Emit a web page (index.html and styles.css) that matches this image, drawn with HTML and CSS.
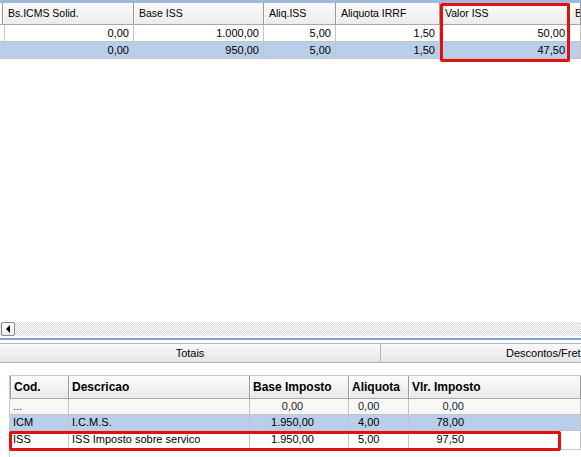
FILE: index.html
```html
<!DOCTYPE html>
<html>
<head>
<meta charset="utf-8">
<link rel="stylesheet" href="styles.css">
</head>
<body>
<div class="app">
  <div class="topgrid">
    <div class="trow thead">
      <div class="c"></div>
      <div class="c">Bs.ICMS Solid.</div>
      <div class="c">Base ISS</div>
      <div class="c">Aliq.ISS</div>
      <div class="c">Aliquota IRRF</div>
      <div class="c">Valor ISS</div>
      <div class="c">B</div>
    </div>
    <div class="trow tbody">
      <div class="c"></div>
      <div class="c">0,00</div>
      <div class="c">1.000,00</div>
      <div class="c">5,00</div>
      <div class="c">1,50</div>
      <div class="c">50,00</div>
      <div class="c"></div>
    </div>
    <div class="trow tbody sel">
      <div class="c"></div>
      <div class="c">0,00</div>
      <div class="c">950,00</div>
      <div class="c">5,00</div>
      <div class="c">1,50</div>
      <div class="c">47,50</div>
      <div class="c"></div>
    </div>
    <div class="redbox top-red"></div>
  </div>
  <div class="spacer"></div>
  <div class="hscroll">
    <div class="arrowbtn"><span class="tri"></span></div>
  </div>
  <div class="blueline"></div>
  <div class="tabbar">
    <div class="tab tab1">Totais</div>
    <div class="tab tab2">Descontos/Fret</div>
  </div>
  <div class="panel">
    <div class="brow bhead">
      <div class="c">Cod.</div>
      <div class="c">Descricao</div>
      <div class="c">Base Imposto</div>
      <div class="c">Aliquota</div>
      <div class="c">Vlr. Imposto</div>
    </div>
    <div class="brow bbody first">
      <div class="c">...</div>
      <div class="c"></div>
      <div class="c base">0,00</div>
      <div class="c aliq">0,00</div>
      <div class="c vlr">0,00</div>
    </div>
    <div class="brow bbody sel">
      <div class="c">ICM</div>
      <div class="c">I.C.M.S.</div>
      <div class="c base">1.950,00</div>
      <div class="c aliq">4,00</div>
      <div class="c vlr">78,00</div>
    </div>
    <div class="brow bbody last">
      <div class="c">ISS</div>
      <div class="c">ISS Imposto sobre servico</div>
      <div class="c base">1.950,00</div>
      <div class="c aliq">5,00</div>
      <div class="c vlr">97,50</div>
    </div>
    <div class="redbox bottom-red"></div>
  </div>
</div>
</body>
</html>
```

FILE: styles.css
```css
* { box-sizing: border-box; }
html, body { margin: 0; padding: 0; background: #fff; }
body {
  font-family: "Liberation Sans", Arial, sans-serif;
  font-size: 11px;
  color: #000;
  width: 581px;
  height: 457px;
  overflow: hidden;
}
.app {
  display: flex;
  flex-direction: column;
  height: 457px;
}
.topgrid {
  position: relative;
  border-top: 3px solid #9db9dc;
}
.trow {
  display: grid;
  grid-template-columns: 3px 131px 130px 72px 104px 130px 11px;
}
.thead { height: 22px; }
.thead .c {
  font-size: 10.5px;
  background: linear-gradient(#fbfbfb, #ececec);
  border-right: 1px solid #9a9a9a;
  border-bottom: 1px solid #a8a8a8;
  box-shadow: inset 1px 0 0 #ffffff;
  padding-left: 5px;
  line-height: 21px;
  white-space: nowrap;
  overflow: hidden;
}
.thead .c:first-child { padding: 0; }
.tbody { height: 17px; }
.tbody .c {
  border-right: 1px solid #c4c4c4;
  border-bottom: 1px solid #c4c4c4;
  text-align: right;
  padding-right: 4px;
  line-height: 16px;
  white-space: nowrap;
  overflow: hidden;
}
.sel .c { background: #b9cfe9; }
.redbox {
  position: absolute;
  border: 3px solid #e01010;
  border-radius: 2px;
  pointer-events: none;
}
.top-red {
  left: 440px;
  top: 0;
  width: 130px;
  height: 59px;
}
.spacer { height: 263px; }
.hscroll {
  height: 14px;
  background: repeating-conic-gradient(#dadada 0 25%, #ffffff 0 50%) 0 0 / 2px 2px;
  padding-left: 1px;
}
.arrowbtn {
  width: 14px;
  height: 14px;
  border: 1px solid #8a8a8a;
  border-radius: 2px;
  background: linear-gradient(#ffffff, #ececec);
  display: flex;
  align-items: center;
  justify-content: center;
}
.tri {
  width: 0;
  height: 0;
  border-top: 4px solid transparent;
  border-bottom: 4px solid transparent;
  border-right: 4px solid #000;
}
.blueline {
  height: 2px;
  margin-top: 2px;
  background: #74a6da;
}
.tabbar {
  margin-top: 3px;
  height: 20px;
  display: flex;
  border-top: 1px solid #b4b4b4;
  border-bottom: 1px solid #b4b4b4;
  background: linear-gradient(#fafafa, #e4e4e4);
}
.tab {
  line-height: 18px;
  white-space: nowrap;
  overflow: hidden;
}
.tab1 {
  width: 381px;
  text-align: center;
  border-right: 1px solid #b4b4b4;
}
.tab2 {
  flex: 1;
  padding-left: 125px;
}
.panel {
  position: relative;
  margin-top: 12px;
  margin-left: 9px;
  border-top: 1px solid #c8c8c8;
  border-left: 1px solid #c8c8c8;
  flex: 1;
}
.brow {
  display: grid;
  grid-template-columns: 59px 181px 99px 60px 1fr;
}
.bhead { height: 23px; }
.bhead .c {
  font-weight: bold;
  font-size: 12px;
  background: linear-gradient(#fbfbfb, #e9e9e9);
  border-right: 1px solid #9a9a9a;
  border-bottom: 1px solid #a8a8a8;
  box-shadow: inset 1px 0 0 #ffffff;
  padding-left: 3px;
  line-height: 22px;
  white-space: nowrap;
}
.bhead .c:first-child { border-left: 1px solid #9a9a9a; }
.bbody { height: 16px; }
.bbody.last { height: 19px; }
.bbody .c {
  border-right: 1px solid #c4c4c4;
  border-bottom: 1px solid #c4c4c4;
  padding-left: 3px;
  line-height: 15px;
  white-space: nowrap;
  overflow: hidden;
}
.bbody.last .c { line-height: 17px; }
.bbody.first .c { background: #f8f8f8; color: #222; }
.bbody .base { text-align: center; padding-right: 13px; padding-left: 0; }
.bbody .aliq { padding-left: 9px; }
.bbody .vlr { text-align: right; padding-right: 116px; padding-left: 0; }
.bottom-red {
  left: -1px;
  top: 55px;
  width: 552px;
  height: 20px;
}
```
